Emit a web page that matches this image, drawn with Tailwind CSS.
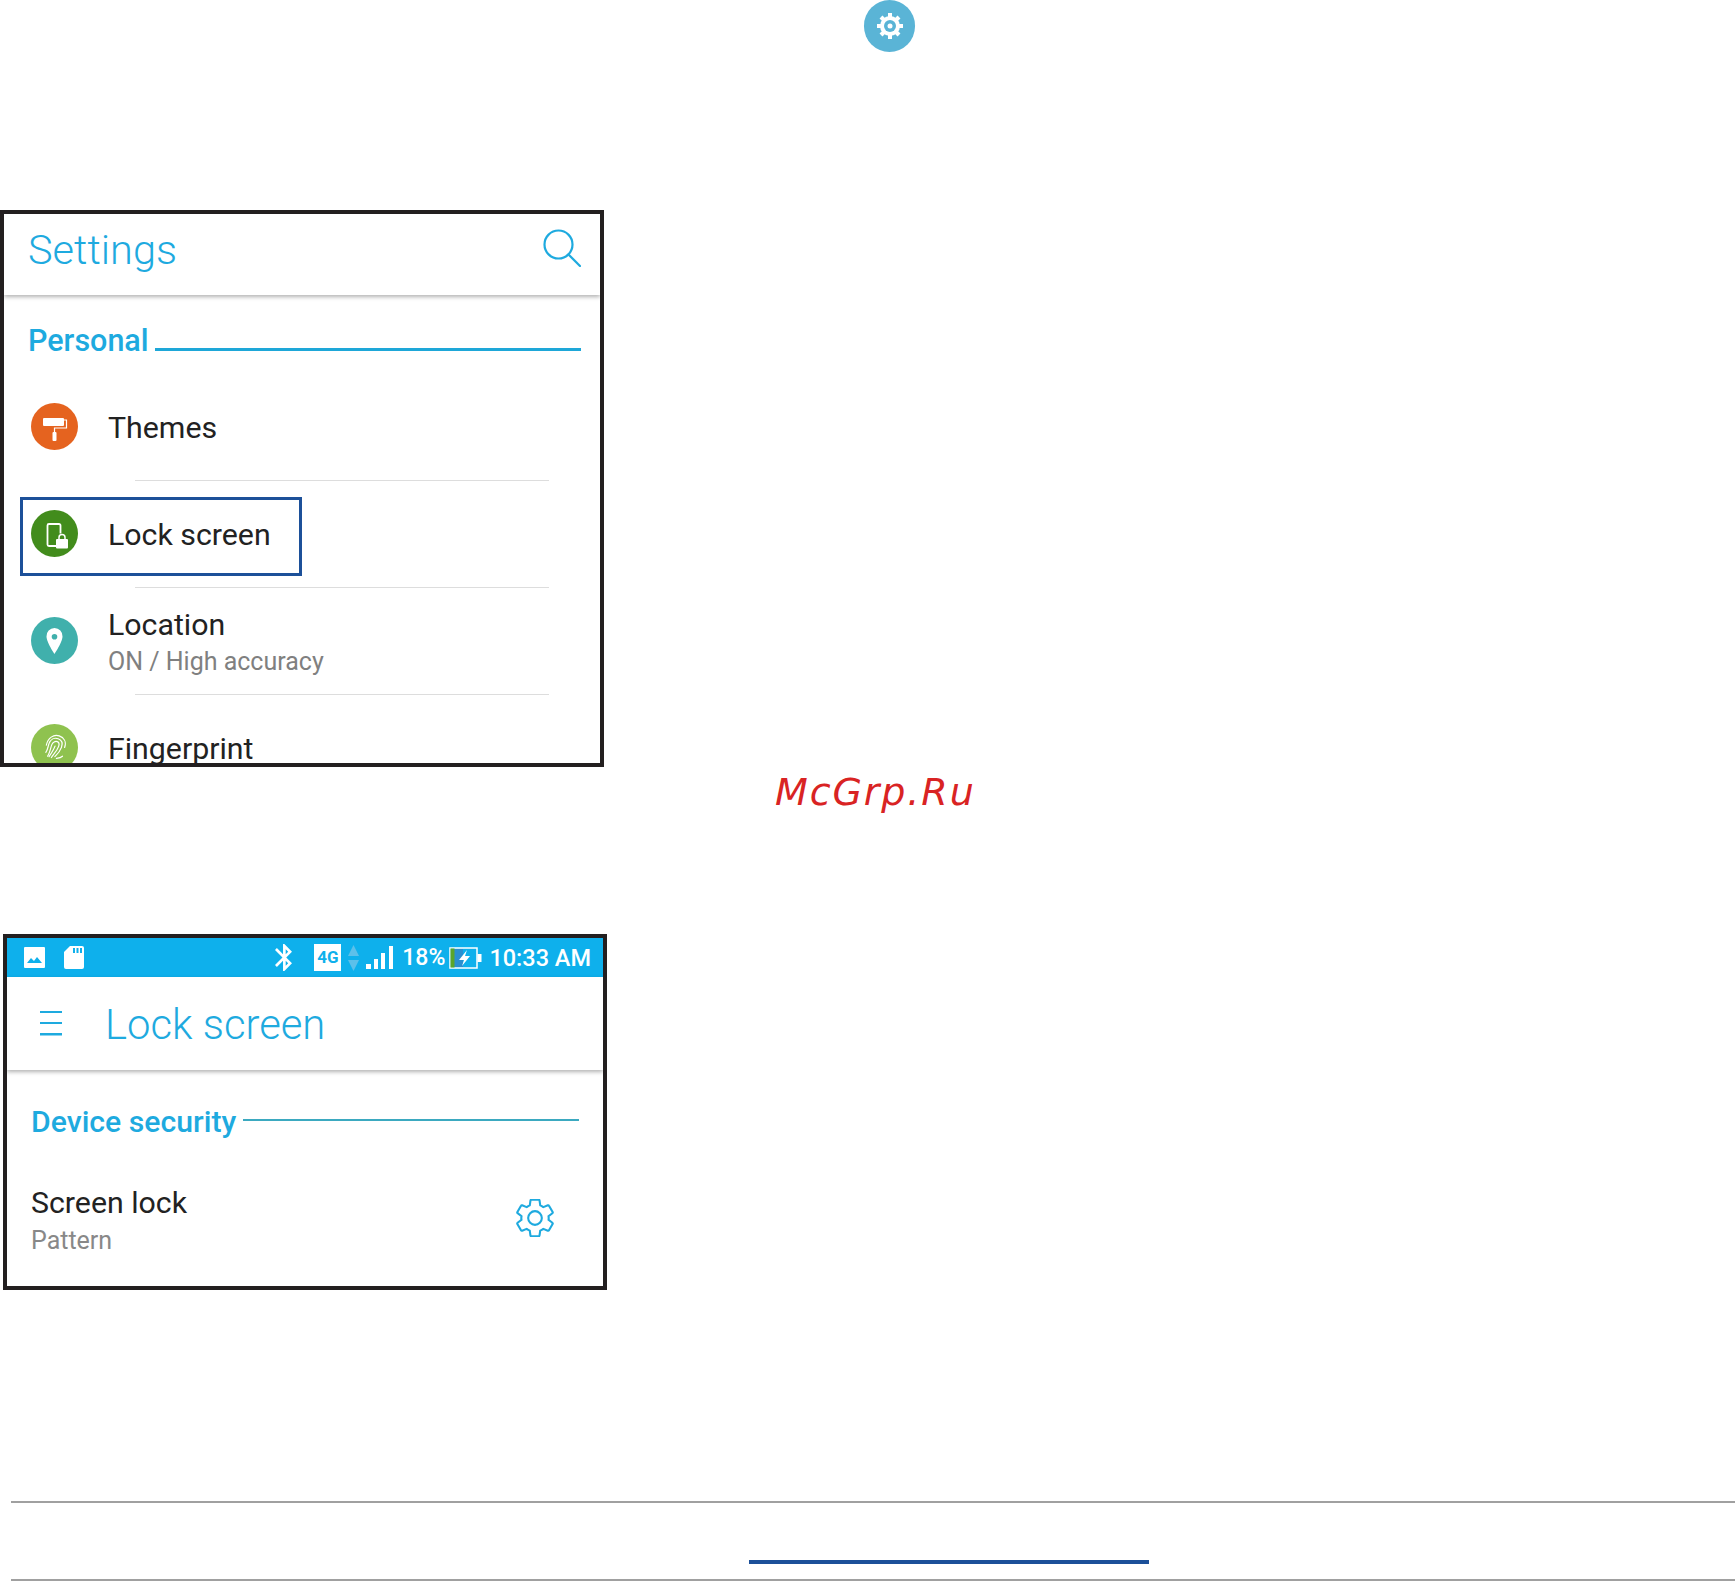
<!DOCTYPE html>
<html lang="en">

<head>
  <meta charset="UTF-8">
  <title>Lock screen settings</title>
  <script src="https://cdn.jsdelivr.net/npm/@tailwindcss/browser@4"></script>
</head>

<body class="bg-white font-['Roboto',sans-serif] w-[1735px] h-[1581px] overflow-hidden">

  <!-- Settings gear bullet -->
  <div class="ml-[864px] w-[51px] h-[52px] rounded-full bg-[#5ab4d6] flex items-center justify-center">
    <svg width="28" height="28" viewBox="0 0 28 28">
      <circle cx="14" cy="14" r="7.5" fill="none" stroke="#fff" stroke-width="5"/>
      <g stroke="#fff" stroke-width="4">
        <line x1="14" y1="1" x2="14" y2="27"/>
        <line x1="1" y1="14" x2="27" y2="14"/>
        <line x1="5" y1="5" x2="23" y2="23"/>
        <line x1="23" y1="5" x2="5" y2="23"/>
      </g>
      <circle cx="14" cy="14" r="6" fill="#5ab4d6"/>
      <circle cx="14" cy="14" r="2.5" fill="#fff"/>
    </svg>
  </div>

  <!-- Settings panel -->
  <div class="mt-[158px] w-[604px] h-[557px] border-4 border-[#231f20] bg-white overflow-hidden relative">
    <div class="h-[81px] flex items-start justify-between pl-[24px] pr-[19px] pt-[12px] shadow-[0_2px_4px_rgba(0,0,0,0.3)] relative">
      <span class="text-[41.5px] leading-[48px] font-light text-[#1eaadf]">Settings</span>
      <svg class="mt-[3px]" width="38" height="38" viewBox="0 0 38 38" fill="none" stroke="#1eaadf" stroke-width="2.2" stroke-linecap="round">
        <circle cx="15.5" cy="15.5" r="14"/>
        <line x1="25.5" y1="25.5" x2="37" y2="37"/>
      </svg>
    </div>

    <div class="h-[78px] pt-[28px] pl-[24px] pr-[19px] flex items-start">
      <span class="text-[30.5px] leading-[36px] font-medium text-[#1eaadf]">Personal</span>
      <div class="grow h-[3px] mt-[25px] ml-[6px] bg-[#1ea7d8]"></div>
    </div>

    <div class="h-[107px] flex items-center pl-[27px]">
      <svg class="shrink-0 -mt-[1px]" width="47" height="47" viewBox="0 0 47 47">
        <circle cx="23.5" cy="23.5" r="23.5" fill="#e5631f"/>
        <rect x="12" y="15" width="21" height="8" rx="1" fill="#fff"/>
        <path d="M33 17h2.500v8h-12v4.500" fill="none" stroke="#fff" stroke-width="1.200"/>
        <rect x="21.500" y="29" width="4" height="9" rx="1" fill="#fff"/>
      </svg>
      <span class="ml-[30px] mt-[3px] text-[30.3px] leading-[36px] text-[#222]">Themes</span>
    </div>
    <div class="h-px ml-[131px] w-[414px] bg-[#ddd]"></div>

    <div class="h-[106px] flex items-center pl-[27px]">
      <svg class="shrink-0 -mt-[2px]" width="47" height="47" viewBox="0 0 47 47">
        <circle cx="23.5" cy="23.5" r="23.5" fill="#428c1c"/>
        <path d="M26 36h-8a1.500 1.500 0 0 1-1.500-1.500v-19a1.500 1.500 0 0 1 1.500-1.500h10a1.500 1.500 0 0 1 1.500 1.500v8" fill="none" stroke="#fff" stroke-width="1.800"/>
        <path d="M28 29v-1.500a3 3 0 0 1 6 0v1.500" fill="none" stroke="#fff" stroke-width="1.500"/>
        <rect x="25" y="29" width="12" height="9.500" rx="1" fill="#fff"/>
      </svg>
      <span class="ml-[30px] mt-[2px] text-[30.3px] leading-[36px] text-[#222]">Lock screen</span>
    </div>
    <div class="h-px ml-[131px] w-[414px] bg-[#ddd]"></div>

    <div class="h-[106px] flex items-center pl-[27px]">
      <svg class="shrink-0 -mt-[2px]" width="47" height="47" viewBox="0 0 47 47">
        <circle cx="23.5" cy="23.5" r="23.5" fill="#40b0ac"/>
        <path fill-rule="evenodd" d="M23.500 11a8 8 0 0 0-8 8.500c0 5.500 8 17.500 8 17.500s8-12 8-17.500a8 8 0 0 0-8-8.500zm0 6a2.800 2.800 0 1 1 0 5.600 2.800 2.800 0 0 1 0-5.600z" fill="#fff"/>
      </svg>
      <div class="ml-[30px] mt-[6px]">
        <div class="text-[30.3px] leading-[36px] text-[#222]">Location</div>
        <div class="text-[25px] leading-[38px] text-[#808080]">ON / High accuracy</div>
      </div>
    </div>
    <div class="h-px ml-[131px] w-[414px] bg-[#ddd]"></div>

    <div class="h-[106px] flex items-center pl-[27px]">
      <svg class="shrink-0 -mt-[2px]" width="47" height="47" viewBox="0 0 47 47">
        <circle cx="23.5" cy="23.5" r="23.5" fill="#8fc24f"/>
        <g fill="none" stroke="#fff" stroke-width="1.200" stroke-linecap="round" transform="rotate(20 23.500 23.500)">
          <path d="M15 24c-1-7 3-13 9-13 5 0 9 3 9 9"/>
          <path d="M17 31c1-3 0-6 0-9 0-5 3-8 7-8s6 3 6 7c0 4-1 7-3 11"/>
          <path d="M20 34c1-3 0-8 0-12 0-3 2-5 4-5s3 2 3 4c0 5-2 9-3 13"/>
          <path d="M23.500 22c0 4-1 8-2 12"/>
          <path d="M29 33c2-1 4-2 5-4"/>
        </g>
      </svg>
      <span class="ml-[30px] mt-[2px] text-[30.3px] leading-[36px] text-[#222]">Fingerprint</span>
    </div>

    <!-- Callout round the Lock screen row -->
    <div class="absolute left-[16px] top-[283px] w-[282px] h-[79px] border-[3px] border-[#1c5099]"></div>
  </div>

  <div class="mt-[2px] ml-[775px] h-[46px] text-[38px] leading-[46px] italic tracking-[1.900px] font-['DejaVu_Sans',sans-serif] text-[#d92323]">McGrp.Ru</div>

  <!-- Lock screen panel -->
  <div class="mt-[119px] ml-[3px] w-[604px] h-[356px] border-4 border-[#231f20] bg-white overflow-hidden">
    <div class="h-[39px] bg-[#0eb0ec] flex items-center pl-[17px] pr-[12px] text-white">
      <svg width="21" height="21" viewBox="0 0 21 21">
        <rect width="21" height="21" rx="1" fill="#fff"/>
        <path d="M3 16l4-5 3 3 3-4 5 6z" fill="#0eb0ec"/>
      </svg>
      <svg class="ml-[19px]" width="20" height="23" viewBox="0 0 20 23">
        <path d="M6 0h12a2 2 0 0 1 2 2v19a2 2 0 0 1-2 2H2a2 2 0 0 1-2-2V6z" fill="#fff"/>
        <path d="M9 2h2v5H9zM12.500 2h2v5h-2zM16 2h2v5h-2z" fill="#0eb0ec"/>
      </svg>
      <svg class="ml-auto" width="17" height="27" viewBox="5 2 12.710 20" preserveAspectRatio="none">
        <path d="M17.710 7.710L12 2h-1v7.590L6.410 5 5 6.410 10.590 12 5 17.590 6.410 19 11 14.410V22h1l5.710-5.710-4.300-4.290 4.300-4.290zM13 5.830l1.880 1.880L13 9.590V5.830zm1.880 10.460L13 18.170v-3.760l1.880 1.880z" fill="#fff"/>
      </svg>
      <div class="ml-[22px] w-[27px] h-[27px] bg-white text-[#0eb0ec] text-[17px] leading-[27px] font-bold text-center">4G</div>
      <svg class="ml-[7px]" width="11" height="26" viewBox="0 0 11 26">
        <path d="M5.500 0L11 11H0z" fill="#5cc0ea"/>
        <path d="M5.500 26L11 15H0z" fill="#5cc0ea"/>
      </svg>
      <svg class="ml-[7px]" width="27" height="23" viewBox="0 0 27 23" fill="#fff">
        <rect x="0" y="18" width="5" height="5"/>
        <rect x="8" y="13" width="4" height="10"/>
        <rect x="15" y="7" width="4" height="16"/>
        <rect x="23" y="0" width="4" height="23"/>
      </svg>
      <span class="ml-[9px] text-[23px] leading-[28px] font-medium">18%</span>
      <svg class="ml-[4px]" width="33" height="22" viewBox="0 0 33 22">
        <rect x="5" y="2" width="9" height="18" fill="#2a8fd0"/>
        <rect x="1" y="1" width="27" height="20" fill="none" stroke="#fff" stroke-width="1.500"/>
        <rect x="1.500" y="1.500" width="4" height="19" fill="#5aa52a"/>
        <rect x="28.500" y="7" width="4" height="8" fill="#fff"/>
        <path d="M18 3l-8 10h5l-2 6 8-10h-5z" fill="#fff"/>
      </svg>
      <span class="ml-[7px] text-[23.5px] leading-[28px] font-medium">10:33 AM</span>
    </div>

    <div class="h-[93px] flex items-start pt-[22px] pl-[33px] shadow-[0_2px_4px_rgba(0,0,0,0.3)] relative">
      <svg class="mt-[11px] shrink-0" width="22" height="26" viewBox="0 0 22 26" fill="#1eaadf">
        <rect y="1" width="22" height="2"/>
        <rect y="12" width="22" height="2"/>
        <rect y="23" width="22" height="2.500"/>
      </svg>
      <span class="ml-[43px] text-[41.8px] leading-[52px] font-light text-[#1eaadf]">Lock screen</span>
    </div>

    <div class="mt-[34px] pl-[24px] pr-[24px] flex items-start">
      <span class="text-[30.2px] leading-[36px] font-medium text-[#1eaadf]">Device security</span>
      <div class="grow h-[2px] mt-[15px] ml-[7px] bg-[#3ba9c0]"></div>
    </div>

    <div class="mt-[45px] pl-[24px] pr-[49px] flex items-center justify-between">
      <div>
        <div class="text-[30.3px] leading-[36px] text-[#222]">Screen lock</div>
        <div class="text-[25px] leading-[39px] text-[#888]">Pattern</div>
      </div>
      <svg class="-mt-[10px]" width="38" height="38" viewBox="2 2 20 20" fill="none" stroke="#1eaadf" stroke-width="1.100">
        <path d="M19.140 12.940c.040-.300.060-.610.060-.940 0-.320-.020-.640-.070-.940l2.030-1.580c.180-.140.230-.410.120-.610l-1.920-3.320c-.120-.220-.370-.290-.590-.220l-2.390.960c-.500-.380-1.030-.700-1.620-.940l-.360-2.540c-.040-.240-.240-.410-.480-.410h-3.840c-.240 0-.430.170-.470.410l-.360 2.540c-.590.240-1.130.570-1.620.940l-2.390-.960c-.220-.080-.470 0-.590.220L2.740 8.870c-.120.210-.080.470.120.610l2.030 1.580c-.050.300-.090.630-.090.940s.020.640.070.940l-2.030 1.580c-.180.140-.230.410-.120.610l1.920 3.320c.120.220.370.290.590.220l2.390-.960c.500.380 1.030.700 1.620.940l.360 2.540c.050.240.240.410.480.410h3.840c.240 0 .440-.170.470-.410l.360-2.540c.590-.240 1.130-.560 1.620-.940l2.390.960c.220.080.470 0 .590-.220l1.920-3.320c.120-.220.070-.470-.120-.610l-2.010-1.580zM12 15.600c-1.980 0-3.600-1.620-3.600-3.600s1.620-3.600 3.600-3.600 3.600 1.620 3.600 3.600-1.620 3.600-3.600 3.600z"/>
      </svg>
    </div>
  </div>

  <!-- Page footer rules -->
  <div class="mt-[211px] ml-[11px] h-[2px] bg-[#a0a0a0]"></div>
  <div class="mt-[57px] ml-[749px] w-[400px] h-[4px] bg-[#1c5099]"></div>
  <div class="mt-[15px] ml-[11px] h-[2px] bg-[#a0a0a0]"></div>

</body>

</html>
